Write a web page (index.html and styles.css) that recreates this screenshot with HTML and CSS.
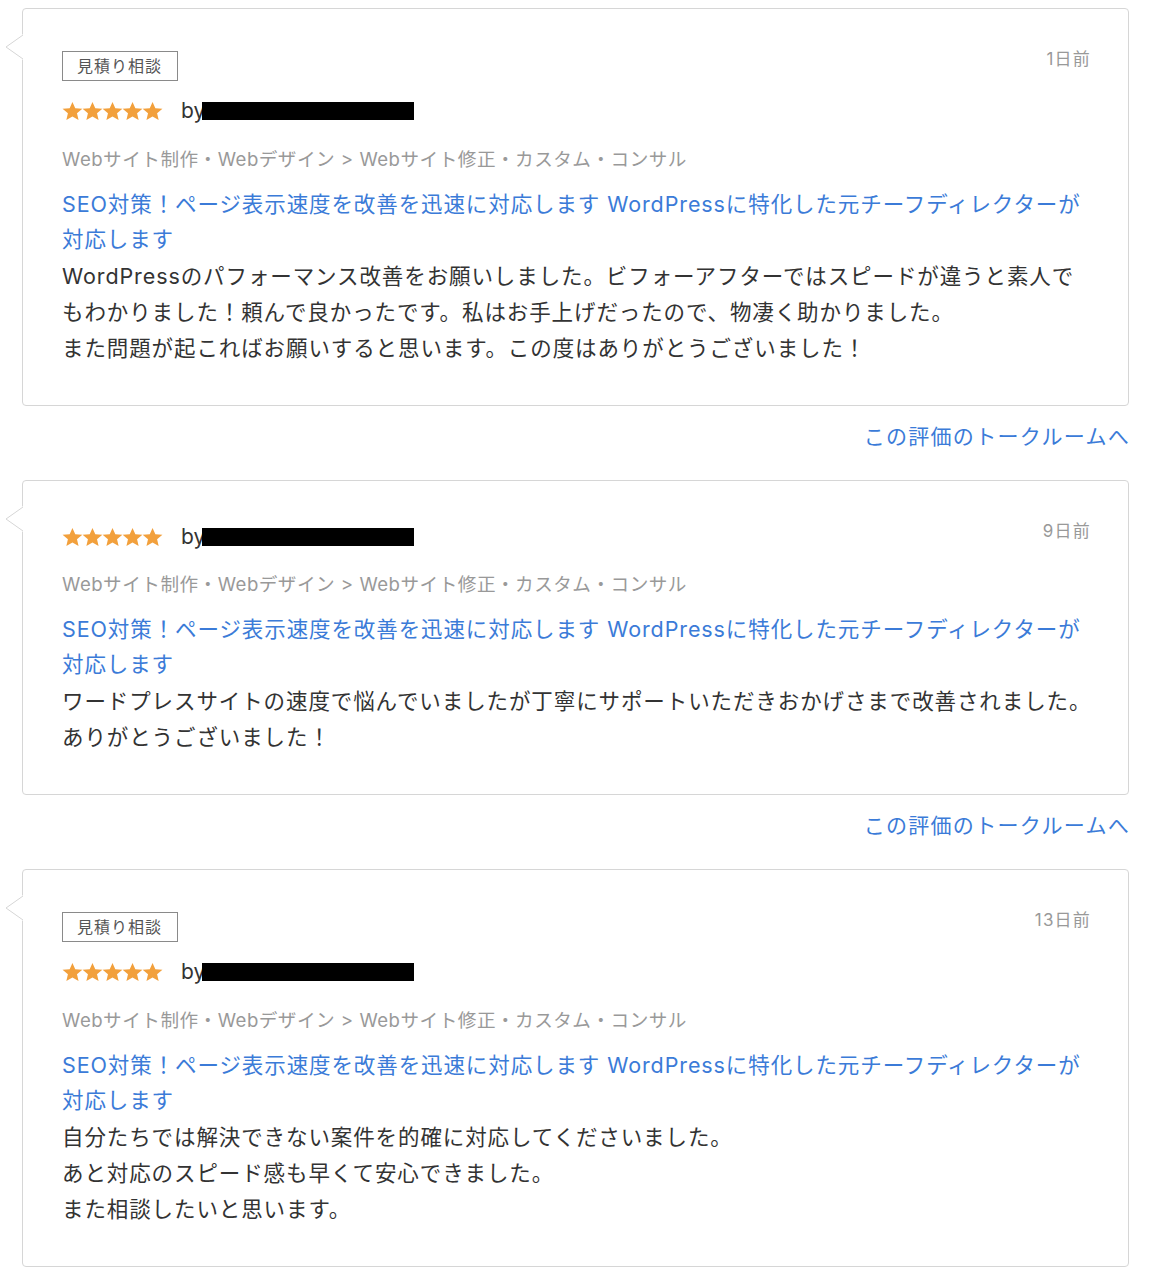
FILE: index.html
```html
<!DOCTYPE html>
<html lang="ja">
<head>
<meta charset="utf-8">
<title>評価一覧</title>
<link rel="stylesheet" href="styles.css">
</head>
<body>
<svg class="defs" width="0" height="0" aria-hidden="true">
  <defs>
    <polygon id="star" points="10,0 12.84,6.28 19.99,6.91 14.59,11.42 16.17,18.09 10,14.6 3.83,18.09 5.41,11.42 0.01,6.91 7.17,6.28"/>
  </defs>
</svg>
<main class="reviews">

  <article class="review">
    <svg class="pointer" width="18" height="26" viewBox="0 0 18 26" aria-hidden="true">
      <polygon points="18,0 1,13 18,26" fill="#fff"/>
      <polyline points="18,1 1,13 18,25" fill="none" stroke="#d6d6d6" stroke-width="1"/>
    </svg>
    <div class="review-head">
      <div class="review-meta">
        <span class="badge">見積り相談</span>
        <div class="rating">
          <svg class="stars" width="101" height="18" viewBox="0 0 101 18.2" aria-hidden="true">
            <use href="#star" x="0"/><use href="#star" x="20.25"/><use href="#star" x="40.5"/><use href="#star" x="60.75"/><use href="#star" x="81"/>
          </svg>
          <span class="by">by</span><span class="redacted"></span>
        </div>
      </div>
      <time class="date">1日前</time>
    </div>
    <p class="category">Webサイト制作・Webデザイン &gt; Webサイト修正・カスタム・コンサル</p>
    <a class="service" href="#">SEO対策！ページ表示速度を改善を迅速に対応します WordPressに特化した元チーフディレクターが対応します</a>
    <p class="comment">WordPressのパフォーマンス改善をお願いしました。ビフォーアフターではスピードが違うと素人でもわかりました！頼んで良かったです。私はお手上げだったので、物凄く助かりました。<br>また問題が起こればお願いすると思います。この度はありがとうございました！</p>
  </article>
  <div class="talk-row"><a class="talk-link" href="#">この評価のトークルームへ</a></div>

  <article class="review">
    <svg class="pointer" width="18" height="26" viewBox="0 0 18 26" aria-hidden="true">
      <polygon points="18,0 1,13 18,26" fill="#fff"/>
      <polyline points="18,1 1,13 18,25" fill="none" stroke="#d6d6d6" stroke-width="1"/>
    </svg>
    <div class="review-head">
      <div class="review-meta">
        <div class="rating rating-first">
          <svg class="stars" width="101" height="18" viewBox="0 0 101 18.2" aria-hidden="true">
            <use href="#star" x="0"/><use href="#star" x="20.25"/><use href="#star" x="40.5"/><use href="#star" x="60.75"/><use href="#star" x="81"/>
          </svg>
          <span class="by">by</span><span class="redacted"></span>
        </div>
      </div>
      <time class="date">9日前</time>
    </div>
    <p class="category">Webサイト制作・Webデザイン &gt; Webサイト修正・カスタム・コンサル</p>
    <a class="service" href="#">SEO対策！ページ表示速度を改善を迅速に対応します WordPressに特化した元チーフディレクターが対応します</a>
    <p class="comment">ワードプレスサイトの速度で悩んでいましたが丁寧にサポートいただきおかげさまで改善されました。ありがとうございました！</p>
  </article>
  <div class="talk-row"><a class="talk-link" href="#">この評価のトークルームへ</a></div>

  <article class="review">
    <svg class="pointer" width="18" height="26" viewBox="0 0 18 26" aria-hidden="true">
      <polygon points="18,0 1,13 18,26" fill="#fff"/>
      <polyline points="18,1 1,13 18,25" fill="none" stroke="#d6d6d6" stroke-width="1"/>
    </svg>
    <div class="review-head">
      <div class="review-meta">
        <span class="badge">見積り相談</span>
        <div class="rating">
          <svg class="stars" width="101" height="18" viewBox="0 0 101 18.2" aria-hidden="true">
            <use href="#star" x="0"/><use href="#star" x="20.25"/><use href="#star" x="40.5"/><use href="#star" x="60.75"/><use href="#star" x="81"/>
          </svg>
          <span class="by">by</span><span class="redacted"></span>
        </div>
      </div>
      <time class="date">13日前</time>
    </div>
    <p class="category">Webサイト制作・Webデザイン &gt; Webサイト修正・カスタム・コンサル</p>
    <a class="service" href="#">SEO対策！ページ表示速度を改善を迅速に対応します WordPressに特化した元チーフディレクターが対応します</a>
    <p class="comment">自分たちでは解決できない案件を的確に対応してくださいました。<br>あと対応のスピード感も早くて安心できました。<br>また相談したいと思います。</p>
  </article>

</main>
</body>
</html>
```

FILE: styles.css
```css
* { box-sizing: border-box; }

html, body {
  margin: 0;
  padding: 0;
  background: #fff;
}

body {
  font-family: "Inter", "Noto Sans CJK JP", sans-serif;
  color: #333;
}

.defs {
  position: absolute;
  width: 0;
  height: 0;
  overflow: hidden;
}

.reviews {
  width: 1107px;
  margin: 0 0 0 22px;
  padding-top: 8px;
}

.review {
  position: relative;
  border: 1px solid #d6d6d6;
  border-radius: 4px;
  padding: 42px 34px 39px 39px;
  background: #fff;
}

.pointer {
  position: absolute;
  left: -18px;
  top: 25px;
  display: block;
}

.review-head {
  display: flex;
  justify-content: space-between;
  align-items: flex-start;
}

.review-meta {
  display: flex;
  flex-direction: column;
  align-items: flex-start;
}

.badge {
  display: inline-block;
  height: 30px;
  line-height: 28px;
  padding: 0 15px 0 14px;
  border: 1px solid #8a8a8a;
  font-size: 16px;
  letter-spacing: 1px;
  color: #555;
}

.rating {
  display: flex;
  align-items: center;
  height: 30px;
  margin-top: 15px;
}

.rating-first {
  margin-top: -1px;
  height: 29px;
}

.stars {
  display: block;
  fill: #f2a03c;
}

.by {
  margin-left: 18px;
  font-size: 21px;
  line-height: 30px;
  color: #333;
}

.redacted {
  display: block;
  width: 212px;
  height: 18px;
  margin-left: -3px;
  background: #000;
}

.date {
  font-size: 17px;
  line-height: 16px;
  letter-spacing: 1.2px;
  color: #999;
  margin-right: 3px;
}

.category {
  margin: 18px 0 0;
  font-size: 18.6px;
  line-height: 30px;
  letter-spacing: 0.5px;
  color: #999;
}

.service {
  display: block;
  margin-top: 13px;
  font-size: 21.5px;
  line-height: 35px;
  letter-spacing: 0.9px;
  color: #3b7bd8;
  text-decoration: none;
}

.comment {
  margin: 1px 0 0;
  font-size: 21.5px;
  line-height: 36px;
  letter-spacing: 0.9px;
  color: #333;
}

.talk-row {
  display: flex;
  justify-content: flex-end;
  margin: 16px 0 28px;
}

.talk-link {
  font-size: 21px;
  line-height: 30px;
  letter-spacing: 1.3px;
  margin-right: -1px;
  color: #3b7bd8;
  text-decoration: none;
}
```
